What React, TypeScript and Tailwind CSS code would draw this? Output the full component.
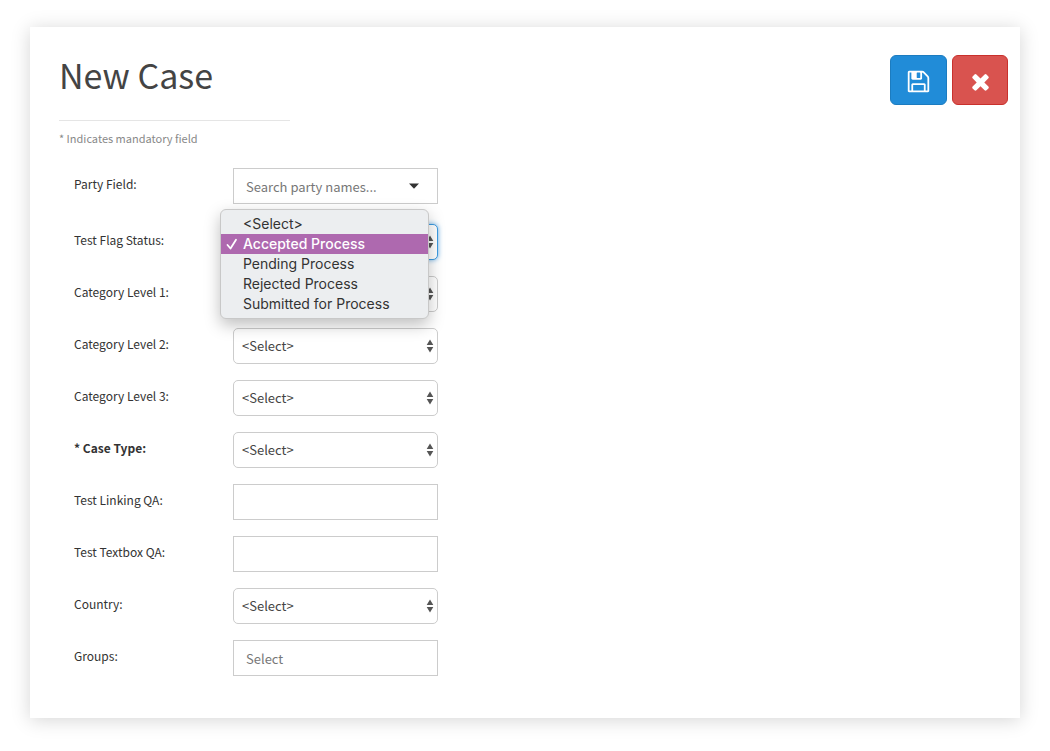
import { useState } from "react";
import type { ReactNode } from "react";

const statuses = [
  "<Select>",
  "Accepted Process",
  "Pending Process",
  "Rejected Process",
  "Submitted for Process",
];

function SaveIcon() {
  return (
    <svg viewBox="0 0 1792 1792" className="size-[25px]" fill="currentColor" aria-hidden="true">
      <path d="M512 1536h768v-384h-768v384zm896 0h128v-896q0-14-10-38.5t-20-34.5l-281-281q-10-10-34-20t-39-10v416q0 40-28 68t-68 28h-576q-40 0-68-28t-28-68v-416h-128v1280h128v-416q0-40 28-68t68-28h832q40 0 68 28t28 68v416zm-384-928v-320q0-13-9.5-22.5t-22.5-9.5h-192q-13 0-22.5 9.5t-9.5 22.5v320q0 13 9.5 22.5t22.5 9.5h192q13 0 22.5-9.5t9.5-22.5zm640 32v928q0 40-28 68t-68 28h-1344q-40 0-68-28t-28-68v-1344q0-40 28-68t68-28h928q40 0 88 20t76 48l280 280q28 28 48 76t20 88z" />
    </svg>
  );
}

function CloseIcon() {
  return (
    <svg viewBox="0 0 1792 1792" className="size-[25px]" fill="currentColor" aria-hidden="true">
      <path d="M1490 1322q0 40-28 68l-136 136q-28 28-68 28t-68-28l-294-294-294 294q-28 28-68 28t-68-28l-136-136q-28-28-28-68t28-68l294-294-294-294q-28-28-28-68t28-68l136-136q28-28 68-28t68 28l294 294 294-294q28-28 68-28t68 28l136 136q28 28 28 68t-28 68l-294 294 294 294q28 28 28 68z" />
    </svg>
  );
}

function UpDownArrows() {
  return (
    <svg
      viewBox="0 0 8 14"
      className="pointer-events-none absolute top-[11px] right-1 h-[14px] w-2 text-[#555]"
      fill="currentColor"
      aria-hidden="true"
    >
      <path d="M4 0.5 7.3 6H0.7zM0.7 8h6.6L4 13.5z" />
    </svg>
  );
}

function Row({ id, label, bold, children }: { id: string; label: string; bold?: boolean; children: ReactNode }) {
  return (
    <div className="flex items-start">
      <label
        htmlFor={id}
        className={
          bold
            ? "w-[159px] shrink-0 pt-1.5 text-xs leading-5 font-bold text-[#333]"
            : "w-[159px] shrink-0 pt-1.5 text-xs leading-5 text-[#333]"
        }
      >
        {label}
      </label>
      <div className="relative w-[205px]">{children}</div>
    </div>
  );
}

function SelectField({ id }: { id: string }) {
  return (
    <>
      <select
        id={id}
        className="block h-9 w-full appearance-none rounded-[5px] border border-[#ccc] bg-white px-2 text-[13px] text-[#444]"
      >
        <option>{"<Select>"}</option>
      </select>
      <UpDownArrows />
    </>
  );
}

function TextField({ id, placeholder }: { id: string; placeholder?: string }) {
  return (
    <input
      id={id}
      type="text"
      placeholder={placeholder}
      className="block h-9 w-full border border-[#ccc] bg-white px-3 text-[13px] text-[#444] placeholder:text-[#777]"
    />
  );
}

function StatusField({ id }: { id: string }) {
  const [value, setValue] = useState("Accepted Process");
  return (
    <>
      <select
        id={id}
        value={value}
        onChange={(e) => setValue(e.target.value)}
        className="block h-9 w-full appearance-none rounded-[5px] border border-[#3d9be0] bg-white px-2 text-[13px] text-transparent shadow-[0_0_5px_#66afe9] outline-none"
      >
        {statuses.map((s) => (
          <option key={s}>{s}</option>
        ))}
      </select>
      <UpDownArrows />
      <ul
        role="listbox"
        aria-label="Test Flag Status"
        className="absolute -top-[15px] -left-[13px] z-10 w-[209px] rounded-md border border-[#c8c8c8] bg-[#eceef0] py-1 font-['Inter',sans-serif] text-sm leading-5 text-[#333] shadow-[0_6px_16px_rgba(0,0,0,0.25)]"
      >
        {statuses.map((s) => (
          <li
            key={s}
            role="option"
            aria-selected={s === value}
            onClick={() => setValue(s)}
            className={
              s === value
                ? "flex cursor-default items-center bg-[#ae69af] font-medium text-white"
                : "flex cursor-default items-center"
            }
          >
            <span className="flex w-[22px] shrink-0 justify-center">
              {s === value && (
                <svg viewBox="0 0 12 12" className="size-3" fill="none" stroke="currentColor" strokeWidth="1.8" strokeLinecap="round" strokeLinejoin="round" aria-hidden="true">
                  <path d="M1.5 7 4.5 10.5 10 1.8" />
                </svg>
              )}
            </span>
            {s}
          </li>
        ))}
      </ul>
    </>
  );
}

export default function App() {
  return (
    <div className="min-h-screen bg-white px-[30px] pt-[27px] pb-8 font-['Noto_Sans_CJK_SC',sans-serif]">
      <main className="bg-white pt-7 pr-3 pb-[42px] pl-[29px] shadow-[0_2px_18px_rgba(0,0,0,0.17)]">
        <header className="flex items-start justify-between">
          <div className="w-[231px] border-b border-[#e5e5e5] pb-[25px]">
            <h1 className="text-[34px] leading-10 text-[#444]">New Case</h1>
          </div>
          <div className="flex gap-[5px]">
            <button
              type="button"
              aria-label="Save"
              className="flex h-[50px] w-[57px] items-center justify-center rounded-md border border-[#1c7cc0] bg-[#218cd8] pt-0.5 text-white"
            >
              <SaveIcon />
            </button>
            <button
              type="button"
              aria-label="Close"
              className="flex h-[50px] w-14 items-center justify-center rounded-md border border-[#c9302c] bg-[#d9534f] pt-0.5 text-white"
            >
              <CloseIcon />
            </button>
          </div>
        </header>
        <p className="pt-[7px] text-[11px] leading-5 text-[#888]">* Indicates mandatory field</p>
        <form className="flex flex-col gap-4 pt-5 pl-[15px]">
          <div className="pb-1">
            <Row id="party" label="Party Field:">
              <TextField id="party" placeholder="Search party names..." />
              <button
                type="button"
                aria-label="Show parties"
                className="absolute top-0 right-2 flex h-9 w-8 items-center justify-center text-[#333]"
              >
                <svg viewBox="0 0 10 6" className="h-1.5 w-2.5" fill="currentColor" aria-hidden="true">
                  <path d="M0 0.5h10L5 5.8z" />
                </svg>
              </button>
            </Row>
          </div>
          <Row id="status" label="Test Flag Status:">
            <StatusField id="status" />
          </Row>
          <Row id="category1" label="Category Level 1:">
            <SelectField id="category1" />
          </Row>
          <Row id="category2" label="Category Level 2:">
            <SelectField id="category2" />
          </Row>
          <Row id="category3" label="Category Level 3:">
            <SelectField id="category3" />
          </Row>
          <Row id="caseType" label="* Case Type:" bold>
            <SelectField id="caseType" />
          </Row>
          <Row id="linking" label="Test Linking QA:">
            <TextField id="linking" />
          </Row>
          <Row id="textbox" label="Test Textbox QA:">
            <TextField id="textbox" />
          </Row>
          <Row id="country" label="Country:">
            <SelectField id="country" />
          </Row>
          <Row id="groups" label="Groups:">
            <TextField id="groups" placeholder="Select" />
          </Row>
        </form>
      </main>
    </div>
  );
}
